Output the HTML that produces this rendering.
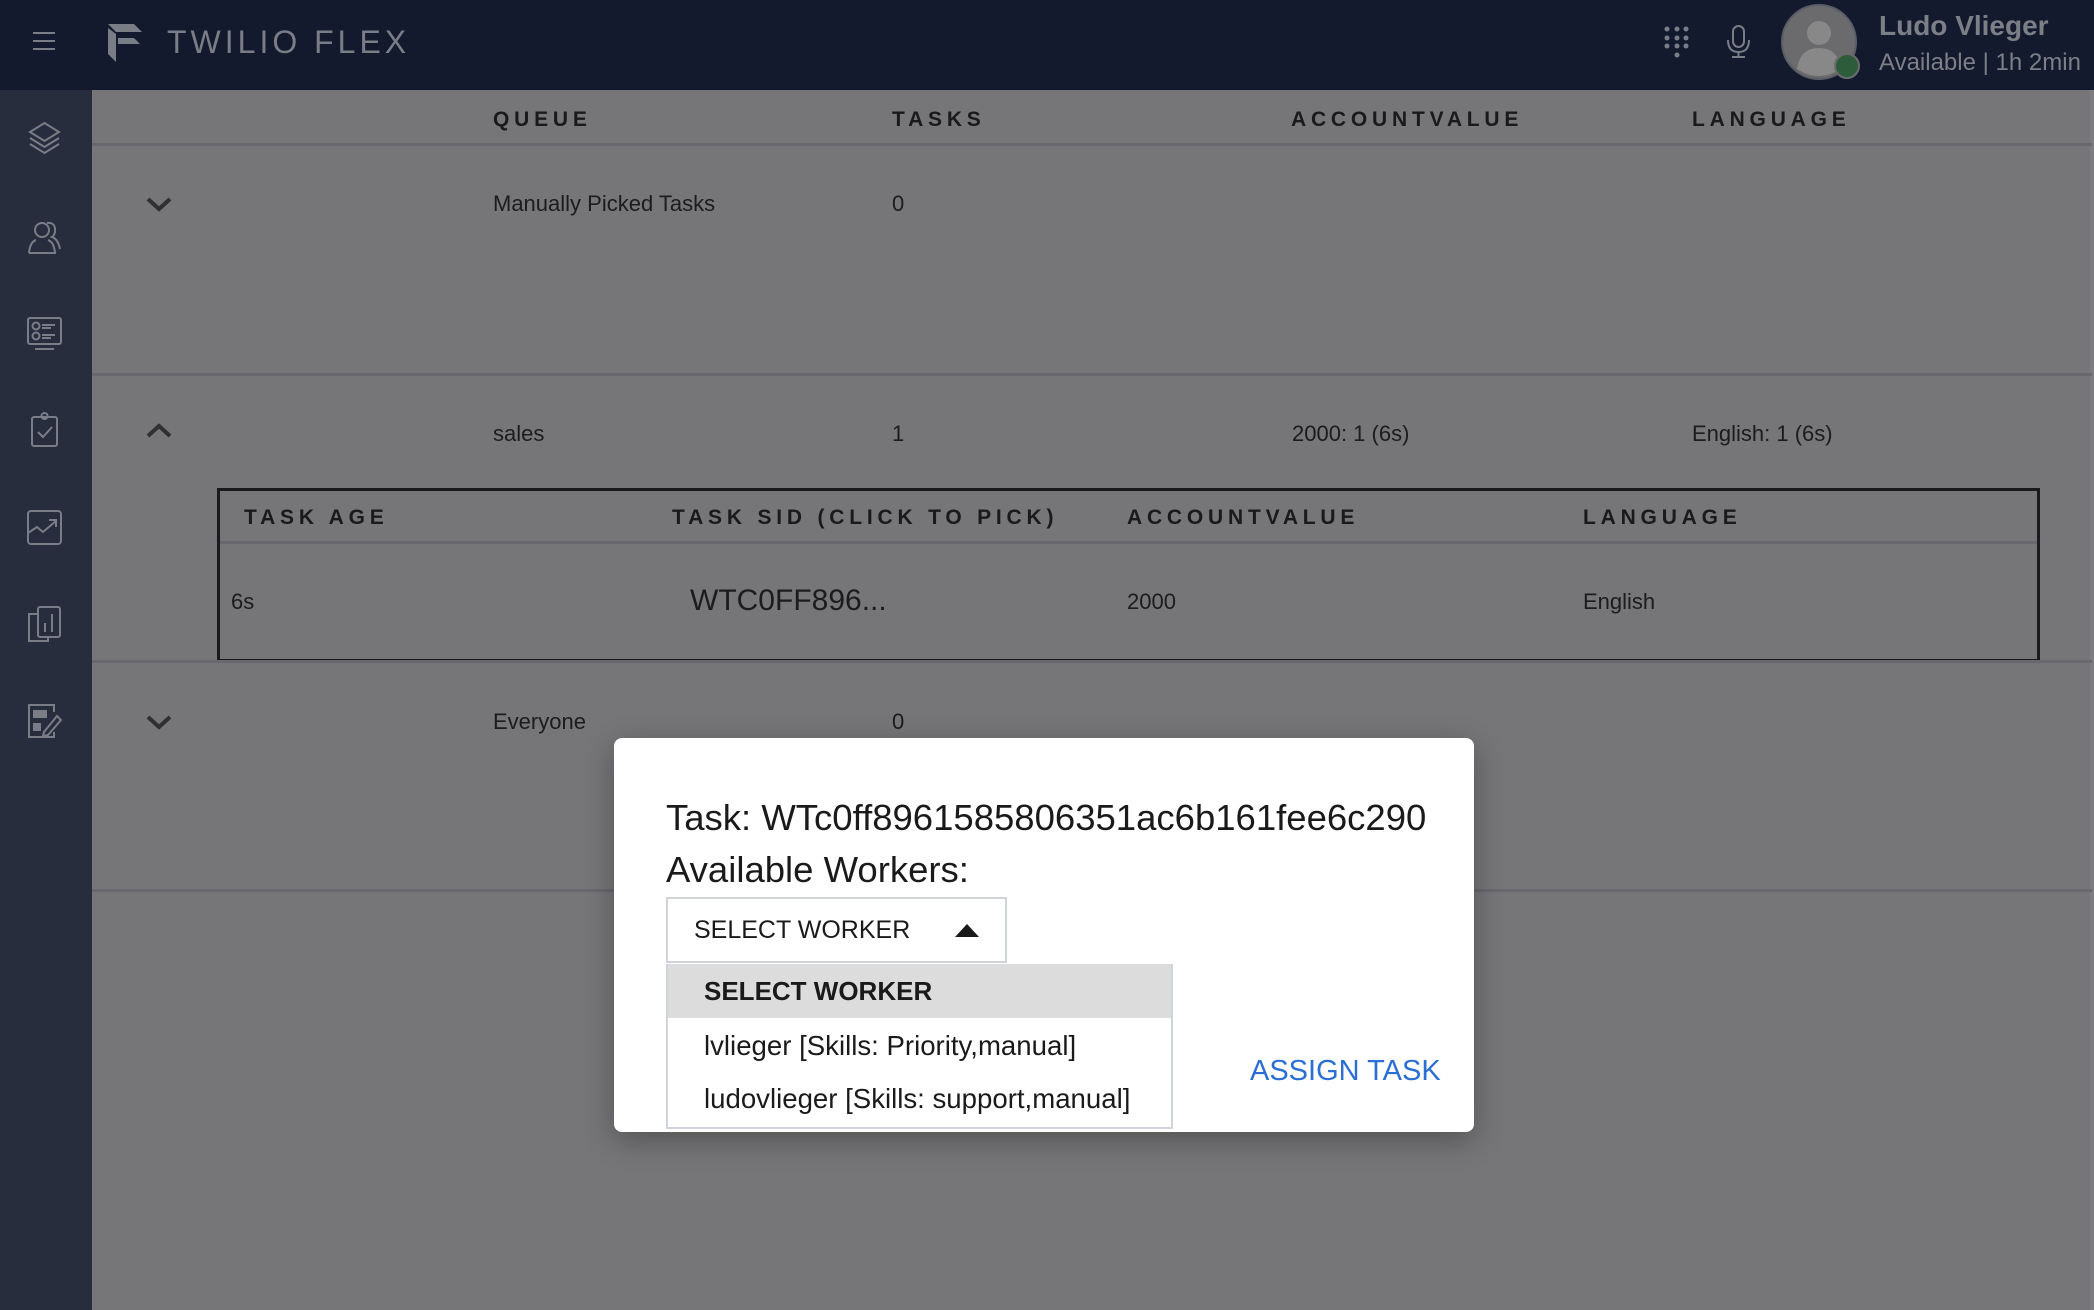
<!DOCTYPE html>
<html><head><meta charset="utf-8"><style>
*{margin:0;padding:0;box-sizing:border-box}
body{width:2094px;height:1310px;overflow:hidden;background:#767678;font-family:"Liberation Sans",sans-serif;color:#1c1c1e;position:relative}
.a{position:absolute;white-space:nowrap}
.top{left:0;top:0;width:2094px;height:90px;background:#141a2e}
.side{left:0;top:90px;width:92px;height:1220px;background:#272d3d}
.hl{position:absolute;height:3px;background:#68686e}
.h{font-weight:bold;font-size:21px;letter-spacing:4.8px;color:#1a1a1c;transform:translateY(-50%)}
.t{font-size:22px;transform:translateY(-50%)}
.ico{position:absolute;left:26px;width:37px;height:37px}
</style></head><body>
<div class="a top"></div>
<div class="a side"></div>
<div class="a" style="left:2090px;top:90px;width:4px;height:1220px;background:#7e7e82"></div>
<svg class="a" style="left:32px;top:31px" width="24" height="20"><g stroke="#7a7d86" stroke-width="2"><line x1="1" y1="2" x2="23" y2="2"/><line x1="1" y1="10" x2="23" y2="10"/><line x1="1" y1="18" x2="23" y2="18"/></g></svg>
<svg class="a" style="left:108px;top:24px" width="36" height="38" viewBox="0 0 36 38"><g fill="#7a7d86"><polygon points="0,0 26,0 34,8 8,8"/><polygon points="0,4 8,10 8,38 0,30"/><polygon points="10,14 26,14 32,20 10,20"/></g></svg>
<div class="a" style="left:167px;top:24px;font-size:32px;letter-spacing:4px;color:#7a7d86">TWILIO FLEX</div>
<svg class="a" style="left:1660px;top:22px" width="36" height="40"><g fill="#7a7d86"><circle cx="7" cy="7" r="2.5"/><circle cx="17" cy="7" r="2.5"/><circle cx="26" cy="7" r="2.5"/><circle cx="7" cy="16" r="2.5"/><circle cx="17" cy="16" r="2.5"/><circle cx="26" cy="16" r="2.5"/><circle cx="7" cy="24" r="2.5"/><circle cx="17" cy="24" r="2.5"/><circle cx="26" cy="24" r="2.5"/><circle cx="17" cy="33" r="2.5"/></g></svg>
<svg class="a" style="left:1724px;top:24px" width="30" height="36"><g fill="none" stroke="#7a7d86" stroke-width="2"><rect x="9" y="2" width="11" height="21" rx="5.5"/><path d="M4 16 Q4 28 14.5 28 Q25 28 25 16"/><line x1="14.5" y1="28" x2="14.5" y2="33"/><line x1="8" y1="33" x2="21" y2="33"/></g></svg>
<svg class="a" style="left:1780px;top:3px" width="84" height="80"><circle cx="39" cy="39" r="37" fill="#6b6b6d" stroke="#5a5d66" stroke-width="2"/><circle cx="39" cy="30" r="12" fill="#888"/><path d="M17 66 Q20 45 39 45 Q58 45 61 66 Q39 80 17 66Z" fill="#888"/><circle cx="67" cy="63" r="12" fill="#2d5c3a" stroke="#6b6b6d" stroke-width="2"/></svg>
<div class="a" style="left:1879px;top:10px;font-size:28px;font-weight:bold;color:#7d7f86">Ludo Vlieger</div>
<div class="a" style="left:1879px;top:49px;font-size:24px;color:#7d7f86">Available | 1h 2min</div>
<svg class="ico" style="top:120px" viewBox="0 0 37 37"><g fill="none" stroke="#7a7d86" stroke-width="2"><path d="M18.5 3 L33 12 L18.5 21 L4 12Z"/><path d="M4 18 L18.5 27 L33 18"/><path d="M4 24 L18.5 33 L33 24"/></g></svg>
<svg class="ico" style="top:219px" viewBox="0 0 37 37"><g fill="none" stroke="#7a7d86" stroke-width="2"><circle cx="16" cy="11" r="7"/><path d="M3 34 Q4 23 10 21 M22 21 Q28 23 29 34 L3 34"/><path d="M21 4 Q30 3 29 13 Q28 17 26 18 Q32 20 34 30"/></g></svg>
<svg class="ico" style="top:315px" viewBox="0 0 37 37"><g fill="none" stroke="#7a7d86" stroke-width="2"><rect x="2" y="3" width="33" height="26" rx="2"/><circle cx="10" cy="11" r="3.5"/><circle cx="10" cy="21" r="3.5"/><line x1="16" y1="10" x2="29" y2="10"/><line x1="16" y1="13" x2="25" y2="13"/><line x1="16" y1="20" x2="29" y2="20"/><line x1="16" y1="23" x2="25" y2="23"/><line x1="9" y1="34" x2="28" y2="34"/></g></svg>
<svg class="ico" style="top:411px" viewBox="0 0 37 37"><g fill="none" stroke="#7a7d86" stroke-width="2"><rect x="6" y="6" width="25" height="29" rx="2"/><circle cx="18.5" cy="5" r="3"/><path d="M12 21 L17 26 L26 16"/></g></svg>
<svg class="ico" style="top:509px" viewBox="0 0 37 37"><g fill="none" stroke="#7a7d86" stroke-width="2"><rect x="2" y="2" width="33" height="33" rx="3"/><path d="M2 24 L11 18 L17 23 L30 12 M23 11 L30 11 L30 18"/></g></svg>
<svg class="ico" style="top:605px" viewBox="0 0 37 37"><g fill="none" stroke="#7a7d86" stroke-width="2"><path d="M12 9 L3 9 L3 36 L22 36 L22 32"/><rect x="12" y="2" width="22" height="30" rx="2"/><line x1="19" y1="18" x2="19" y2="27"/><line x1="26" y1="9" x2="26" y2="27"/></g></svg>
<svg class="ico" style="top:702px" viewBox="0 0 37 37"><g fill="none" stroke="#7a7d86" stroke-width="2"><path d="M28 10 L28 3 L3 3 L3 35 L28 35 L28 30"/><rect x="8" y="9" width="12" height="6" fill="#7a7d86"/><rect x="8" y="22" width="6" height="6" fill="#7a7d86"/><path d="M18 30 L31 14 L35 18 L22 33 L17 34Z"/></g></svg>
<div class="a h" style="left:493px;top:120px">QUEUE</div>
<div class="a h" style="left:892px;top:120px">TASKS</div>
<div class="a h" style="left:1291px;top:120px">ACCOUNTVALUE</div>
<div class="a h" style="left:1692px;top:120px">LANGUAGE</div>
<div class="hl" style="left:92px;top:143px;width:2000px"></div>
<svg class="a" style="left:145px;top:196px" width="28" height="18"><path d="M3 3 L14 13 L25 3" fill="none" stroke="#303032" stroke-width="4"/></svg>
<svg class="a" style="left:145px;top:421px" width="28" height="18"><path d="M3 15 L14 5 L25 15" fill="none" stroke="#303032" stroke-width="4"/></svg>
<svg class="a" style="left:145px;top:714px" width="28" height="18"><path d="M3 3 L14 13 L25 3" fill="none" stroke="#303032" stroke-width="4"/></svg>
<div class="a t" style="left:493px;top:204px">Manually Picked Tasks</div>
<div class="a t" style="left:892px;top:204px">0</div>
<div class="hl" style="left:92px;top:373px;width:2000px"></div>
<div class="a t" style="left:493px;top:434px">sales</div>
<div class="a t" style="left:892px;top:434px">1</div>
<div class="a t" style="left:1292px;top:434px">2000: 1 (6s)</div>
<div class="a t" style="left:1692px;top:434px">English: 1 (6s)</div>
<div class="a" style="left:217px;top:488px;width:1823px;height:174px;border:3px solid #1a1a1c"></div>
<div class="a h" style="left:244px;top:518px">TASK AGE</div>
<div class="a h" style="left:672px;top:518px">TASK SID (CLICK TO PICK)</div>
<div class="a h" style="left:1127px;top:518px">ACCOUNTVALUE</div>
<div class="a h" style="left:1583px;top:518px">LANGUAGE</div>
<div class="hl" style="left:220px;top:541px;width:1817px"></div>
<div class="a t" style="left:231px;top:602px">6s</div>
<div class="a t" style="left:690px;top:601px;font-size:30px">WTC0FF896...</div>
<div class="a t" style="left:1127px;top:602px">2000</div>
<div class="a t" style="left:1583px;top:602px">English</div>
<div class="hl" style="left:92px;top:660px;width:2000px"></div>
<div class="a t" style="left:493px;top:722px">Everyone</div>
<div class="a t" style="left:892px;top:722px">0</div>
<div class="hl" style="left:92px;top:889px;width:2000px"></div>
<div class="a" style="left:614px;top:738px;width:860px;height:394px;background:#fff;border-radius:8px;box-shadow:0 8px 30px rgba(0,0,0,.3)"></div>
<div class="a" style="left:666px;top:797px;font-size:36.5px;color:#1a1a1a">Task: WTc0ff8961585806351ac6b161fee6c290</div>
<div class="a" style="left:666px;top:849px;font-size:36.5px;color:#1a1a1a">Available Workers:</div>
<div class="a" style="left:666px;top:897px;width:341px;height:66px;border:2px solid #d0d2dc;background:#fff"></div>
<div class="a" style="left:694px;top:916px;font-size:25px;color:#1a1a1a">SELECT WORKER</div>
<svg class="a" style="left:954px;top:922px" width="26" height="16"><polygon points="1,15 13,2 25,15" fill="#1a1a1a"/></svg>
<div class="a" style="left:666px;top:964px;width:507px;height:165px;border:2px solid #d0d2dc;border-top:none;background:#fff"></div>
<div class="a" style="left:668px;top:964px;width:503px;height:54px;background:#dcdcdc"></div>
<div class="a" style="left:704px;top:976px;font-size:26px;font-weight:bold;color:#1a1a1a">SELECT WORKER</div>
<div class="a" style="left:704px;top:1030px;font-size:27.6px;color:#1a1a1a">lvlieger [Skills: Priority,manual]</div>
<div class="a" style="left:704px;top:1083px;font-size:27.6px;color:#1a1a1a">ludovlieger [Skills: support,manual]</div>
<div class="a" style="left:1250px;top:1055px;font-size:29px;color:#2b6fd4">ASSIGN TASK</div>
</body></html>
